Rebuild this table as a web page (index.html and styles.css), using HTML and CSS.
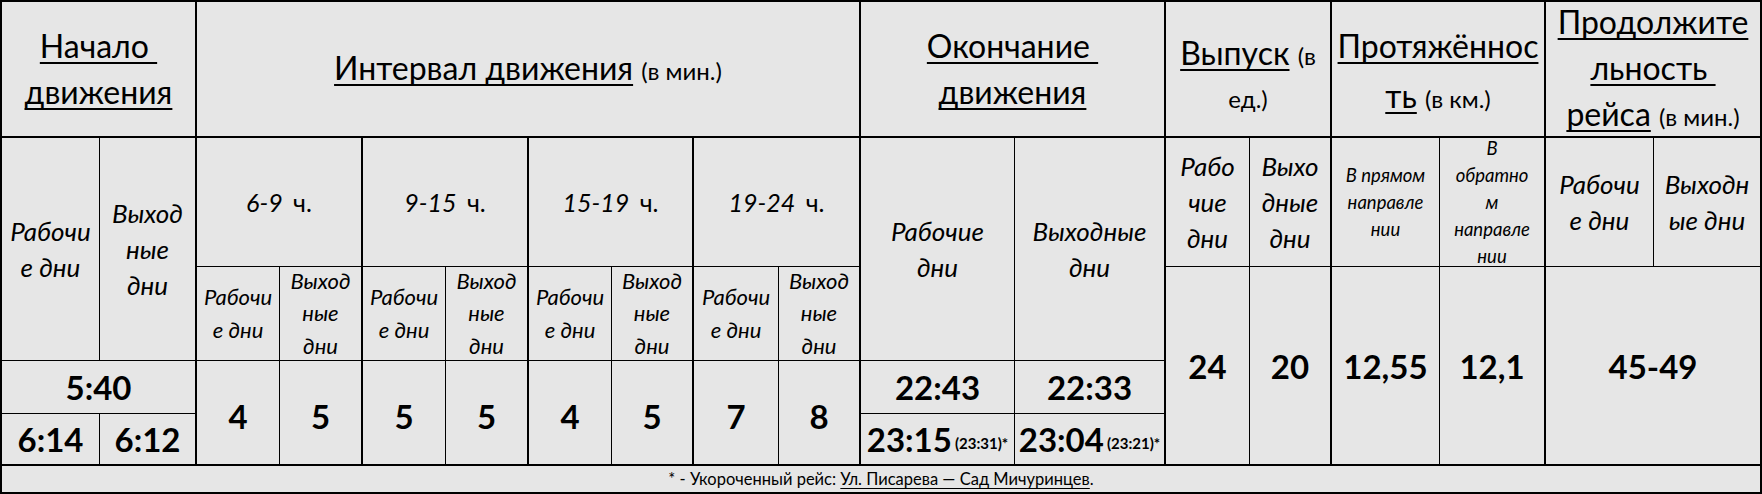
FILE: index.html
```html
<!DOCTYPE html>
<html lang="ru">
<head>
<meta charset="utf-8">
<title>Расписание маршрута</title>
<link rel="stylesheet" href="styles.css">
</head>
<body>
<div class="sheet">
  <!-- row 1 -->
  <div class="c s2 br bb h"><div><u>Начало&nbsp;</u><br><u>движения</u></div></div>
  <div class="c s8 br bb h"><div><u>Интервал движения</u> <small>(в мин.)</small></div></div>
  <div class="c s2 br bb h"><div><u>Окончание&nbsp;</u><br><u>движения</u></div></div>
  <div class="c s2 br bb h"><div class="two"><div class="l1"><u>Выпуск</u> <small>(в</small></div><div class="l2"><small>ед.)</small></div></div></div>
  <div class="c s2 br bb h"><div class="len"><u>Протяжённос</u><br><u>ть</u> <small>(в км.)</small></div></div>
  <div class="c s2 br bb h"><div><u>Продолжите</u><br><u>льность&nbsp;</u><br><u>рейса</u> <small>(в мин.)</small></div></div>

  <!-- row 2 -->
  <div class="c r2 i28">Рабочи<br>е дни</div>
  <div class="c r2 br i28">Выход<br>ные<br>дни</div>
  <div class="c s2 br rng"><span><i>6-9</i> ч.</span></div>
  <div class="c s2 br rng"><span><i>9-15</i> ч.</span></div>
  <div class="c s2 br rng"><span><i>15-19</i> ч.</span></div>
  <div class="c s2 br rng"><span><i>19-24</i> ч.</span></div>
  <div class="c r2 i28">Рабочие<br>дни</div>
  <div class="c r2 br i28">Выходные<br>дни</div>
  <div class="c i28">Рабо<br>чие<br>дни</div>
  <div class="c br i28">Выхо<br>дные<br>дни</div>
  <div class="c i20">В прямом<br>направле<br>нии</div>
  <div class="c br i20">В<br>обратно<br>м<br>направле<br>нии</div>
  <div class="c i28">Рабочи<br>е дни</div>
  <div class="c br i28">Выходн<br>ые дни</div>

  <!-- row 3 -->
  <div class="c i24">Рабочи<br>е дни</div>
  <div class="c br i24">Выход<br>ные<br>дни</div>
  <div class="c i24">Рабочи<br>е дни</div>
  <div class="c br i24">Выход<br>ные<br>дни</div>
  <div class="c i24">Рабочи<br>е дни</div>
  <div class="c br i24">Выход<br>ные<br>дни</div>
  <div class="c i24">Рабочи<br>е дни</div>
  <div class="c br i24">Выход<br>ные<br>дни</div>
  <div class="c r3 bb num">24</div>
  <div class="c r3 br bb num">20</div>
  <div class="c r3 bb num">12,55</div>
  <div class="c r3 br bb num">12,1</div>
  <div class="c s2 r3 br bb num">45-49</div>

  <!-- row 4 -->
  <div class="c s2 br num">5:40</div>
  <div class="c r2 bb num iv">4</div>
  <div class="c r2 br bb num iv">5</div>
  <div class="c r2 bb num iv">5</div>
  <div class="c r2 br bb num iv">5</div>
  <div class="c r2 bb num iv">4</div>
  <div class="c r2 br bb num iv">5</div>
  <div class="c r2 bb num iv">7</div>
  <div class="c r2 br bb num iv">8</div>
  <div class="c num">22:43</div>
  <div class="c br num">22:33</div>

  <!-- row 5 -->
  <div class="c bb num">6:14</div>
  <div class="c br bb num">6:12</div>
  <div class="c bb num">23:15<span class="note">(23:31)*</span></div>
  <div class="c br bb num">23:04<span class="note">(23:21)*</span></div>

  <!-- row 6 -->
  <div class="c s18 br bb foot"><span>* - Укороченный рейс: <u>Ул. Писарева — Сад Мичуринцев</u>.</span></div>
</div>
</body>
</html>
```

FILE: styles.css
```css
* {
  box-sizing: border-box;
}

html,
body {
  margin: 0;
  padding: 0;
  background: #e6e6e6;
}

body {
  font-family: Lato, "Open Sans", sans-serif;
  color: #000;
}

.sheet {
  display: grid;
  grid-template-columns: 98px 97px 83px 83px 83px 83px 83px 82px 85px 82px 154px 151px 84px 82px 108px 106px 108px 108px;
  grid-template-rows: 136px 129px 94px 53px 52px 28px;
  width: 1762px;
  height: 494px;
  border-top: 2px solid #000;
  border-left: 2px solid #000;
  background: #e6e6e6;
}

.c {
  display: flex;
  align-items: center;
  justify-content: center;
  text-align: center;
  white-space: nowrap;
  border-right: 1px solid #000;
  border-bottom: 1px solid #000;
  min-width: 0;
  min-height: 0;
}

.br {
  border-right-width: 2px;
}

.bb {
  border-bottom-width: 2px;
}

.s2 {
  grid-column: span 2;
}

.s8 {
  grid-column: span 8;
}

.s18 {
  grid-column: span 18;
}

.r2 {
  grid-row: span 2;
}

.r3 {
  grid-row: span 3;
}

u {
  text-decoration: underline;
  text-decoration-thickness: 2px;
  text-underline-offset: 4px;
  text-decoration-skip-ink: none;
}

.h {
  font-size: 32px;
  line-height: 46px;
}

.h small {
  font-size: 24px;
}

.h .two {
  padding-top: 8px;
}

.h .l1 {
  line-height: 46px;
}

.h .l2 {
  line-height: 34px;
}

.h .len {
  line-height: 50px;
  padding-top: 6px;
}

.i28 {
  font-style: italic;
  font-size: 26px;
  line-height: 36px;
}

.i24 {
  font-style: italic;
  font-size: 22px;
  line-height: 32.5px;
}

.i20 {
  font-style: italic;
  font-size: 18.5px;
  line-height: 27px;
}

.rng {
  font-size: 25px;
}

.rng i {
  margin-right: 4px;
}

.num {
  font-weight: 700;
  font-size: 33px;
}

.iv {
  padding-top: 6px;
}

.note {
  font-size: 15px;
  margin-left: 3px;
  padding-top: 8px;
}

.foot {
  font-size: 16.5px;
}

.foot u {
  text-decoration-thickness: 1px;
  text-underline-offset: 3px;
}
```
